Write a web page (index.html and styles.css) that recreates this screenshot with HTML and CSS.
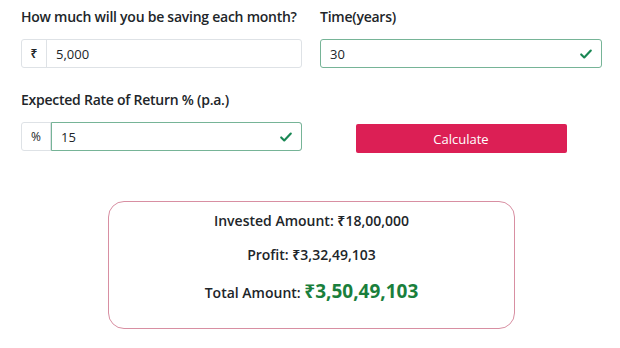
FILE: index.html
```html
<!DOCTYPE html>
<html lang="en">
<head>
  <meta name="viewport" content="width=device-width, initial-scale=1.0">
  <title>SIP Calculator</title>
  <link rel="stylesheet" href="styles.css">
</head>
<body>

<div class="calc">
  <div class="field">
    <label>How much will you be saving each month?</label>
    <div class="input-group">
      <span class="addon">₹</span>
      <input type="text" class="control" value="5,000">
    </div>
  </div>

  <div class="field">
    <label>Time(years)</label>
    <div class="input-group valid">
      <input type="text" class="control" value="30">
      <svg class="tick" viewBox="0 0 16 16" width="14" height="14"><path d="M2.5 8.5l3.5 3.5 7.5-8" fill="none" stroke="#198754" stroke-width="2.4" stroke-linecap="round" stroke-linejoin="round"/></svg>
    </div>
  </div>

  <div class="field">
    <label>Expected Rate of Return % (p.a.)</label>
    <div class="input-group">
      <span class="addon wide">%</span>
      <div class="inner valid">
        <input type="text" class="control" value="15">
        <svg class="tick" viewBox="0 0 16 16" width="14" height="14"><path d="M2.5 8.5l3.5 3.5 7.5-8" fill="none" stroke="#198754" stroke-width="2.4" stroke-linecap="round" stroke-linejoin="round"/></svg>
      </div>
    </div>
  </div>

  <div class="field action">
    <button class="btn">Calculate</button>
  </div>
</div>

<div class="result">
  <p>Invested Amount: ₹18,00,000</p>
  <p>Profit: ₹3,32,49,103</p>
  <p>Total Amount: <span class="total">₹3,50,49,103</span></p>
</div>

</body>
</html>
```

FILE: styles.css
```css
body {
  font-family: "Open Sans", "Noto Sans", sans-serif;
  color: #212529;
  margin: 0;
  padding: 0;
  background: #fff;
}
.calc {
  display: grid;
  grid-template-columns: 281px 282px;
  column-gap: 18px;
  row-gap: 22px;
  padding: 7px 0 0 21px;
}
.field label {
  display: block;
  font-size: 14px;
  font-weight: 600;
  letter-spacing: -0.25px;
  line-height: 20px;
  white-space: nowrap;
  margin-bottom: 12px;
}
.input-group {
  display: flex;
  align-items: center;
  height: 29px;
  box-sizing: border-box;
  border: 1px solid #dee2e6;
  border-radius: 3px;
  background: #fff;
}
.addon {
  width: 24px;
  height: 100%;
  display: flex;
  align-items: center;
  justify-content: center;
  border-right: 1px solid #dee2e6;
  font-size: 12px;
  font-weight: 600;
}
.addon.wide {
  width: 28px;
  font-weight: 400;
}
.control {
  flex: 1;
  border: none;
  outline: none;
  font-family: inherit;
  font-size: 13px;
  color: #212529;
  padding: 0 9px;
  background: transparent;
  min-width: 0;
}
.input-group.valid, .inner.valid {
  border: 1px solid #76b497;
}
.inner {
  flex: 1;
  display: flex;
  align-items: center;
  height: calc(100% + 2px);
  margin: -1px -1px -1px 0;
  box-sizing: border-box;
  border-radius: 0 3px 3px 0;
}
.tick {
  margin-right: 8px;
}
.action {
  display: flex;
  justify-content: center;
  align-items: flex-end;
}
.btn {
  width: 211px;
  height: 29px;
  margin-bottom: -2px;
  background-color: #dc1f55;
  color: #fff;
  border: none;
  border-radius: 2px;
  font-family: inherit;
  font-size: 13px;
}
.result {
  width: 407px;
  box-sizing: border-box;
  margin: 50px 0 0 108px;
  border: 1px solid #d88fa2;
  border-radius: 16px;
  padding: 9px 0 25px;
  text-align: center;
}
.result p {
  margin: 0;
  font-size: 14px;
  font-weight: 600;
  line-height: 20px;
}
.result p + p {
  margin-top: 14px;
}
.result p:last-child {
  margin-top: 16px;
}
.total {
  color: #1a7f3c;
  font-size: 19px;
  font-weight: 700;
}
```
